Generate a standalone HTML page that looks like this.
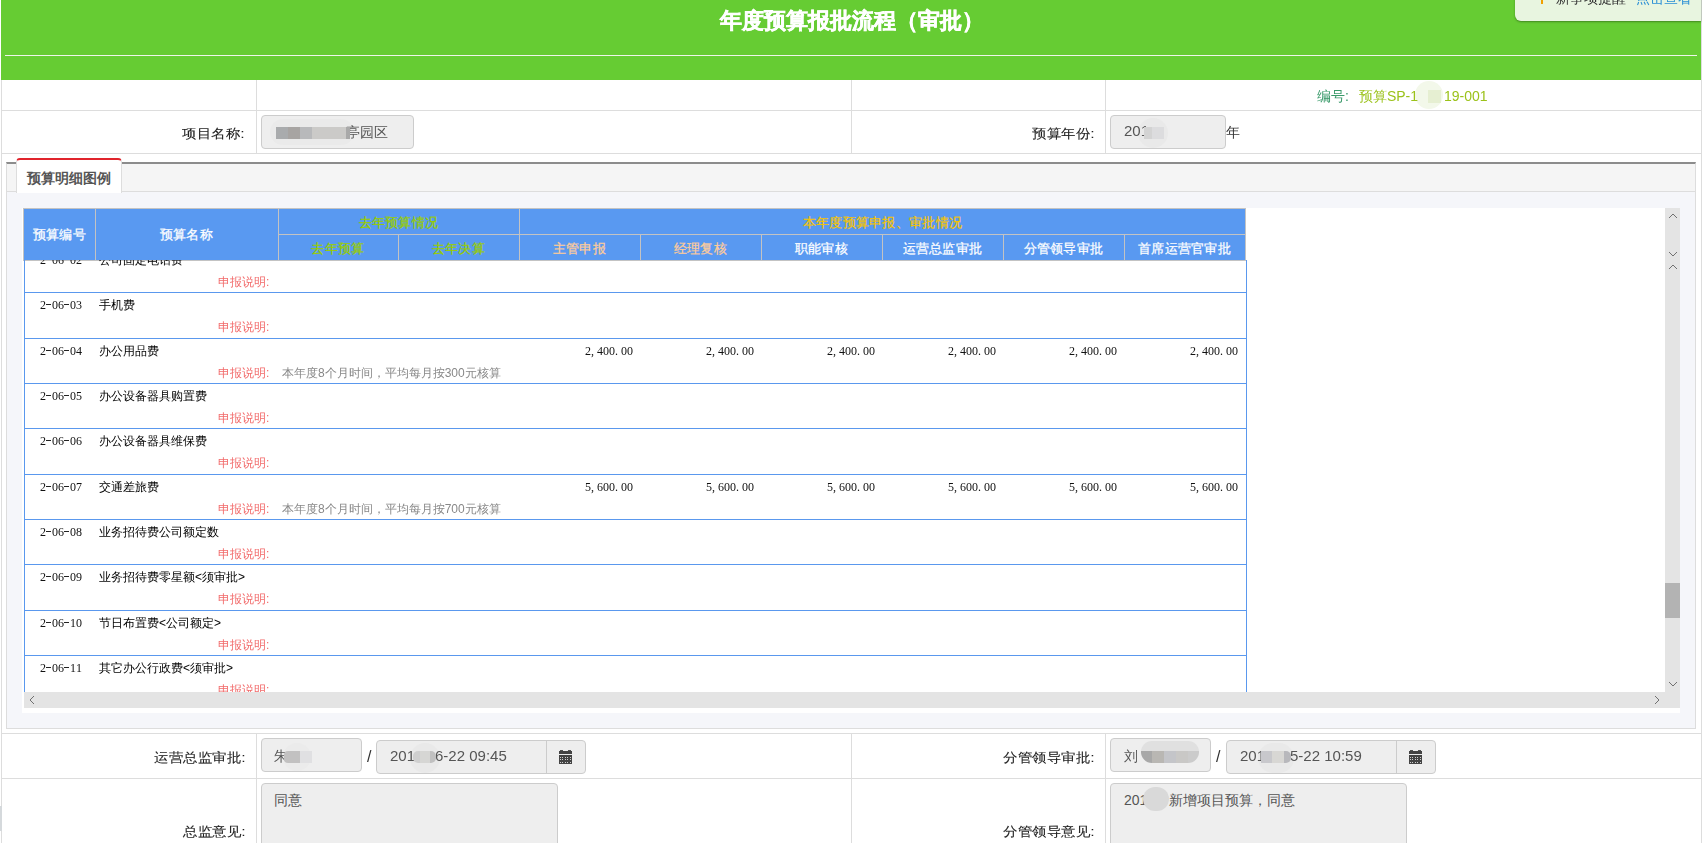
<!DOCTYPE html><html><head><meta charset="utf-8"><style>
*{margin:0;padding:0;box-sizing:border-box}
html,body{width:1702px;height:843px;overflow:hidden;background:#fff;font-family:"Liberation Sans",sans-serif;color:#333}
.a{position:absolute;white-space:nowrap}
.hl{position:absolute;height:1px;background:#ddd}
.vl{position:absolute;width:1px;background:#ddd}
.lbl{position:absolute;font-size:14px;color:#222;-webkit-text-stroke:.1px currentColor;transform:scaleY(.9);text-align:right;line-height:20px;white-space:nowrap;letter-spacing:.6px}
.inp{position:absolute;background:#eee;border:1px solid #ccc;border-radius:4px}
.t{position:absolute;font-size:14px;color:#555;line-height:20px;white-space:nowrap}
.bl{position:absolute;background:#c4c4c4}
.th{position:absolute;font-size:13px;line-height:16px;text-align:center;white-space:nowrap;-webkit-text-stroke:.25px currentColor;letter-spacing:.3px}
.cd,.num{position:absolute;font-family:"Liberation Serif",serif;font-size:12px;color:#111;line-height:12px;white-space:nowrap}
.cd i,.num i{font-style:normal;display:inline-block;width:6px;text-align:left}
.cd i.h{height:10px;vertical-align:top;background:linear-gradient(#222,#222) no-repeat 0 5px/5px 1px}
.nm{position:absolute;font-size:12px;color:#000;line-height:14px;white-space:nowrap}
.sb{position:absolute;font-size:12px;color:#f26b6b;line-height:14px;white-space:nowrap}
.ds{position:absolute;font-size:12px;color:#888;line-height:14px;white-space:nowrap}
.num{text-align:right}
</style></head><body>
<div class="vl" style="left:1px;top:0;height:843px"></div>
<div class="vl" style="left:1701px;top:0;height:843px"></div>
<div class="a" style="left:0;top:806px;width:2px;height:25px;background:#d5d9dc"></div>
<div class="a" style="left:1px;top:0;width:1700px;height:80px;background:#66cc33"></div>
<div class="a" style="left:5px;top:55px;width:1692px;height:1px;background:#eef5ea"></div>
<div class="a" style="left:7px;top:7px;width:1690px;text-align:center;color:#fff;font-size:22px;font-weight:bold;line-height:28px;-webkit-text-stroke:.5px #fff">年度预算报批流程（审批）</div>
<div class="a" style="left:1515px;top:-12px;width:186px;height:33px;background:#e8f5e0;border-radius:0 0 0 6px;box-shadow:0 1px 2px rgba(40,90,20,.6)"></div>
<div class="a" style="left:1541px;top:-3px;width:2px;height:7px;background:#f0a000"></div>
<div class="a" style="left:1556px;top:-12px;font-size:14px;line-height:20px;color:#333">新事项提醒</div>
<div class="a" style="left:1636px;top:-12px;font-size:14px;line-height:20px;color:#2a8fd6">点击查看</div>
<div class="hl" style="left:1px;top:110px;width:1700px"></div>
<div class="hl" style="left:1px;top:153px;width:1700px"></div>
<div class="vl" style="left:256px;top:80px;height:73px"></div>
<div class="vl" style="left:851px;top:80px;height:73px"></div>
<div class="vl" style="left:1105px;top:80px;height:73px"></div>
<div class="a" style="left:1415px;top:81px;width:28px;height:28px;border-radius:14px;background:#f3f8ea"></div>
<div class="a" style="left:1428px;top:90px;width:13px;height:13px;background:#e6efd2"></div>
<div class="a" style="left:1317px;top:86px;font-size:14px;line-height:20px;color:#3a9a6a">编号:<span style="color:#9bc21a;margin-left:10px">预算SP-1<span style="display:inline-block;width:26px"></span>19-001</span></div>
<div class="lbl" style="left:100px;top:123px;width:145px">项目名称:</div>
<div class="inp" style="left:261px;top:115px;width:153px;height:34px"></div>
<div class="t" style="left:346px;top:122px">亭园区</div>
<div class="a" style="left:270px;top:119px;width:84px;height:26px;border-radius:13px;background:#eaeaea;mix-blend-mode:darken"></div>
<div class="bl" style="left:276px;top:127px;width:74px;height:12px;background:linear-gradient(90deg,#a9abad 0,#a9abad 12px,#a7a4a2 12px,#a7a4a2 24px,#b8b9bb 24px,#b8b9bb 36px,#cbcac8 36px,#cbcac8 70px,#a9a9a9 70px)"></div>
<div class="lbl" style="left:950px;top:123px;width:145px">预算年份:</div>
<div class="inp" style="left:1110px;top:115px;width:116px;height:34px"></div>
<div class="t" style="left:1124px;top:121px;font-size:15px">201</div>
<div class="a" style="left:1138px;top:118px;width:30px;height:30px;border-radius:15px;background:#e9e9e9;mix-blend-mode:darken"></div>
<div class="bl" style="left:1144px;top:127px;width:20px;height:12px;background:linear-gradient(90deg,#d3d3d3 0,#d3d3d3 8px,#dcdcde 8px)"></div>
<div class="t" style="left:1226px;top:122px;color:#333">年</div>
<div class="a" style="left:6px;top:162px;width:1690px;height:567px;border:1px solid #ddd;border-top:2px solid #8c8c8c;background:#f5f6fa"></div>
<div class="a" style="left:7px;top:164px;width:1688px;height:28px;background:#f5f5f5;border-bottom:1px solid #ddd"></div>
<div class="a" style="left:16px;top:158px;width:106px;height:35px;background:#fff;border:1px solid #ddd;border-top:2px solid #e0242c;border-bottom:none;border-radius:4px 4px 0 0"></div>
<div class="a" style="left:27px;top:169px;font-size:14px;font-weight:bold;color:#555;line-height:18px">预算明细图例</div>
<div class="a" style="left:22px;top:208px;width:1658px;height:505px;background:#fff"></div>
<div class="a" style="left:23px;top:208px;width:1223px;height:53px;background:#5999f1;border:1px solid #c3c3c3"></div>
<div class="a" style="left:95px;top:208px;width:1px;height:52px;background:#c3c3c3"></div>
<div class="a" style="left:278px;top:208px;width:1px;height:52px;background:#c3c3c3"></div>
<div class="a" style="left:278px;top:234px;width:968px;height:1px;background:#c3c3c3"></div>
<div class="a" style="left:398px;top:234px;width:1px;height:26px;background:#c3c3c3"></div>
<div class="a" style="left:519px;top:208px;width:1px;height:52px;background:#c3c3c3"></div>
<div class="a" style="left:640px;top:234px;width:1px;height:26px;background:#c3c3c3"></div>
<div class="a" style="left:761px;top:234px;width:1px;height:26px;background:#c3c3c3"></div>
<div class="a" style="left:882px;top:234px;width:1px;height:26px;background:#c3c3c3"></div>
<div class="a" style="left:1003px;top:234px;width:1px;height:26px;background:#c3c3c3"></div>
<div class="a" style="left:1124px;top:234px;width:1px;height:26px;background:#c3c3c3"></div>
<div class="th" style="left:24px;top:227px;width:71px;color:#fff">预算编号</div>
<div class="th" style="left:95px;top:227px;width:183px;color:#fff">预算名称</div>
<div class="th" style="left:278px;top:215px;width:241px;color:#99cc00">去年预算情况</div>
<div class="th" style="left:519px;top:215px;width:727px;color:#f5c400">本年度预算申报、审批情况</div>
<div class="th" style="left:278px;top:241px;width:120px;color:#99cc00">去年预算</div>
<div class="th" style="left:398px;top:241px;width:121px;color:#99cc00">去年决算</div>
<div class="th" style="left:519px;top:241px;width:121px;color:#ffcc99">主管申报</div>
<div class="th" style="left:640px;top:241px;width:121px;color:#ffcc99">经理复核</div>
<div class="th" style="left:761px;top:241px;width:121px;color:#fff">职能审核</div>
<div class="th" style="left:882px;top:241px;width:121px;color:#fff">运营总监审批</div>
<div class="th" style="left:1003px;top:241px;width:121px;color:#fff">分管领导审批</div>
<div class="th" style="left:1124px;top:241px;width:121px;color:#fff">首席运营官审批</div>
<div class="a" style="left:24px;top:260px;width:1px;height:432px;background:#5a98ee"></div>
<div class="a" style="left:1246px;top:260px;width:1px;height:432px;background:#5a98ee"></div>
<div class="a" style="left:24px;top:292px;width:1223px;height:1px;background:#5a98ee"></div>
<div class="a" style="left:24px;top:338px;width:1223px;height:1px;background:#5a98ee"></div>
<div class="a" style="left:24px;top:383px;width:1223px;height:1px;background:#5a98ee"></div>
<div class="a" style="left:24px;top:428px;width:1223px;height:1px;background:#5a98ee"></div>
<div class="a" style="left:24px;top:474px;width:1223px;height:1px;background:#5a98ee"></div>
<div class="a" style="left:24px;top:519px;width:1223px;height:1px;background:#5a98ee"></div>
<div class="a" style="left:24px;top:564px;width:1223px;height:1px;background:#5a98ee"></div>
<div class="a" style="left:24px;top:610px;width:1223px;height:1px;background:#5a98ee"></div>
<div class="a" style="left:24px;top:655px;width:1223px;height:1px;background:#5a98ee"></div>
<div class="a" style="left:25px;top:260px;width:1221px;height:432px;overflow:hidden">
<div class="cd" style="left:15px;top:-6px"><i>2</i><i class="h"></i><i>0</i><i>6</i><i class="h"></i><i>0</i><i>2</i></div>
<div class="nm" style="left:74px;top:-7px">公司固定电话费</div>
<div class="sb" style="left:193px;top:15px">申报说明:</div>
<div class="cd" style="left:15px;top:39px"><i>2</i><i class="h"></i><i>0</i><i>6</i><i class="h"></i><i>0</i><i>3</i></div>
<div class="nm" style="left:74px;top:38px">手机费</div>
<div class="sb" style="left:193px;top:60px">申报说明:</div>
<div class="cd" style="left:15px;top:85px"><i>2</i><i class="h"></i><i>0</i><i>6</i><i class="h"></i><i>0</i><i>4</i></div>
<div class="nm" style="left:74px;top:84px">办公用品费</div>
<div class="sb" style="left:193px;top:106px">申报说明:</div>
<div class="ds" style="left:257px;top:106px">本年度8个月时间，平均每月按300元核算</div>
<div class="num" style="left:508px;top:85px;width:100px"><i>2</i><i>,</i><i>4</i><i>0</i><i>0</i><i>.</i><i>0</i><i>0</i></div>
<div class="num" style="left:629px;top:85px;width:100px"><i>2</i><i>,</i><i>4</i><i>0</i><i>0</i><i>.</i><i>0</i><i>0</i></div>
<div class="num" style="left:750px;top:85px;width:100px"><i>2</i><i>,</i><i>4</i><i>0</i><i>0</i><i>.</i><i>0</i><i>0</i></div>
<div class="num" style="left:871px;top:85px;width:100px"><i>2</i><i>,</i><i>4</i><i>0</i><i>0</i><i>.</i><i>0</i><i>0</i></div>
<div class="num" style="left:992px;top:85px;width:100px"><i>2</i><i>,</i><i>4</i><i>0</i><i>0</i><i>.</i><i>0</i><i>0</i></div>
<div class="num" style="left:1113px;top:85px;width:100px"><i>2</i><i>,</i><i>4</i><i>0</i><i>0</i><i>.</i><i>0</i><i>0</i></div>
<div class="cd" style="left:15px;top:130px"><i>2</i><i class="h"></i><i>0</i><i>6</i><i class="h"></i><i>0</i><i>5</i></div>
<div class="nm" style="left:74px;top:129px">办公设备器具购置费</div>
<div class="sb" style="left:193px;top:151px">申报说明:</div>
<div class="cd" style="left:15px;top:175px"><i>2</i><i class="h"></i><i>0</i><i>6</i><i class="h"></i><i>0</i><i>6</i></div>
<div class="nm" style="left:74px;top:174px">办公设备器具维保费</div>
<div class="sb" style="left:193px;top:196px">申报说明:</div>
<div class="cd" style="left:15px;top:221px"><i>2</i><i class="h"></i><i>0</i><i>6</i><i class="h"></i><i>0</i><i>7</i></div>
<div class="nm" style="left:74px;top:220px">交通差旅费</div>
<div class="sb" style="left:193px;top:242px">申报说明:</div>
<div class="ds" style="left:257px;top:242px">本年度8个月时间，平均每月按700元核算</div>
<div class="num" style="left:508px;top:221px;width:100px"><i>5</i><i>,</i><i>6</i><i>0</i><i>0</i><i>.</i><i>0</i><i>0</i></div>
<div class="num" style="left:629px;top:221px;width:100px"><i>5</i><i>,</i><i>6</i><i>0</i><i>0</i><i>.</i><i>0</i><i>0</i></div>
<div class="num" style="left:750px;top:221px;width:100px"><i>5</i><i>,</i><i>6</i><i>0</i><i>0</i><i>.</i><i>0</i><i>0</i></div>
<div class="num" style="left:871px;top:221px;width:100px"><i>5</i><i>,</i><i>6</i><i>0</i><i>0</i><i>.</i><i>0</i><i>0</i></div>
<div class="num" style="left:992px;top:221px;width:100px"><i>5</i><i>,</i><i>6</i><i>0</i><i>0</i><i>.</i><i>0</i><i>0</i></div>
<div class="num" style="left:1113px;top:221px;width:100px"><i>5</i><i>,</i><i>6</i><i>0</i><i>0</i><i>.</i><i>0</i><i>0</i></div>
<div class="cd" style="left:15px;top:266px"><i>2</i><i class="h"></i><i>0</i><i>6</i><i class="h"></i><i>0</i><i>8</i></div>
<div class="nm" style="left:74px;top:265px">业务招待费公司额定数</div>
<div class="sb" style="left:193px;top:287px">申报说明:</div>
<div class="cd" style="left:15px;top:311px"><i>2</i><i class="h"></i><i>0</i><i>6</i><i class="h"></i><i>0</i><i>9</i></div>
<div class="nm" style="left:74px;top:310px">业务招待费零星额&lt;须审批&gt;</div>
<div class="sb" style="left:193px;top:332px">申报说明:</div>
<div class="cd" style="left:15px;top:357px"><i>2</i><i class="h"></i><i>0</i><i>6</i><i class="h"></i><i>1</i><i>0</i></div>
<div class="nm" style="left:74px;top:356px">节日布置费&lt;公司额定&gt;</div>
<div class="sb" style="left:193px;top:378px">申报说明:</div>
<div class="cd" style="left:15px;top:402px"><i>2</i><i class="h"></i><i>0</i><i>6</i><i class="h"></i><i>1</i><i>1</i></div>
<div class="nm" style="left:74px;top:401px">其它办公行政费&lt;须审批&gt;</div>
<div class="sb" style="left:193px;top:423px">申报说明:</div>
</div>
<div class="a" style="left:1665px;top:208px;width:15px;height:500px;background:#e4e4e4"></div>
<div class="a" style="left:24px;top:692px;width:1656px;height:16px;background:#e4e4e4"></div>
<div class="a" style="left:1665px;top:583px;width:15px;height:35px;background:#b3b3b3"></div>
<svg class="a" style="left:1668px;top:212px" width="10" height="10"><polyline points="1,6 5,2 9,6" fill="none" stroke="#707070" stroke-width="1"/></svg>
<svg class="a" style="left:1668px;top:250px" width="10" height="10"><polyline points="1,2 5,6 9,2" fill="none" stroke="#707070" stroke-width="1"/></svg>
<svg class="a" style="left:1668px;top:263px" width="10" height="10"><polyline points="1,6 5,2 9,6" fill="none" stroke="#707070" stroke-width="1"/></svg>
<svg class="a" style="left:1668px;top:680px" width="10" height="10"><polyline points="1,2 5,6 9,2" fill="none" stroke="#707070" stroke-width="1"/></svg>
<svg class="a" style="left:28px;top:695px" width="10" height="10"><polyline points="6,1 2,5 6,9" fill="none" stroke="#707070" stroke-width="1"/></svg>
<svg class="a" style="left:1653px;top:695px" width="10" height="10"><polyline points="2,1 6,5 2,9" fill="none" stroke="#707070" stroke-width="1"/></svg>
<div class="hl" style="left:1px;top:733px;width:1700px"></div>
<div class="hl" style="left:1px;top:778px;width:1700px"></div>
<div class="vl" style="left:256px;top:733px;height:110px"></div>
<div class="vl" style="left:851px;top:733px;height:110px"></div>
<div class="vl" style="left:1105px;top:733px;height:110px"></div>
<div class="lbl" style="left:96px;top:747px;width:150px">运营总监审批:</div>
<div class="inp" style="left:261px;top:738px;width:101px;height:34px"></div>
<div class="t" style="left:274px;top:746px">朱</div>
<div class="a" style="left:283px;top:743px;width:28px;height:28px;border-radius:14px;background:#ebebeb;mix-blend-mode:darken"></div>
<div class="bl" style="left:284px;top:751px;width:28px;height:12px;border-radius:4px 0 0 4px;background:linear-gradient(90deg,#c2c1c1 0,#c2c1c1 16px,#e0e0e2 16px)"></div>
<div class="t" style="left:367px;top:747px;color:#333;font-size:16px">/</div>
<div class="inp" style="left:376px;top:740px;width:210px;height:34px"></div>
<div class="a" style="left:546px;top:740px;width:1px;height:34px;background:#ccc"></div>
<div class="t" style="left:390px;top:746px;font-size:15px">201<span style="display:inline-block;width:20px"></span>6-22 09:45</div>
<div class="a" style="left:410px;top:743px;width:30px;height:30px;border-radius:15px;background:#e9e9e9;mix-blend-mode:darken"></div>
<div class="bl" style="left:413px;top:751px;width:23px;height:12px;border-radius:5px;background:linear-gradient(90deg,#cfcfcf 0,#cfcfcf 7px,#d6d6d4 7px,#d6d6d4 17px,#c0c0c0 17px)"></div>
<div class="lbl" style="left:96px;top:821px;width:150px">总监意见:</div>
<div class="inp" style="left:261px;top:783px;width:297px;height:80px"></div>
<div class="t" style="left:274px;top:790px">同意</div>
<div class="lbl" style="left:946px;top:747px;width:149px">分管领导审批:</div>
<div class="inp" style="left:1110px;top:738px;width:101px;height:34px"></div>
<div class="t" style="left:1124px;top:746px">刘</div>
<div class="bl" style="left:1141px;top:741px;width:58px;height:22px;border-radius:11px;background:linear-gradient(#e0e0e0 0,#e0e0e0 10px,transparent 10px),linear-gradient(90deg,#a8a8a8 0,#a8a8a8 11px,#b9b7b3 11px,#b9b7b3 23px,#c4c5c9 23px,#c4c5c9 35px,#c9c8c6 35px,#c9c8c6 47px,#cbcbcb 47px)"></div>
<div class="t" style="left:1216px;top:747px;color:#333;font-size:16px">/</div>
<div class="inp" style="left:1226px;top:740px;width:210px;height:34px"></div>
<div class="a" style="left:1396px;top:740px;width:1px;height:34px;background:#ccc"></div>
<div class="t" style="left:1240px;top:746px;font-size:15px">201<span style="display:inline-block;width:25px"></span>5-22 10:59</div>
<div class="a" style="left:1258px;top:743px;width:36px;height:30px;border-radius:15px;background:#e9e9e9;mix-blend-mode:darken"></div>
<div class="bl" style="left:1261px;top:751px;width:30px;height:12px;border-radius:0 5px 5px 0;background:linear-gradient(90deg,#c8c8cc 0,#c8c8cc 11px,#d8d7d4 11px,#d8d7d4 23px,#b8b8bc 23px)"></div>
<div class="lbl" style="left:946px;top:821px;width:149px">分管领导意见:</div>
<div class="inp" style="left:1110px;top:783px;width:297px;height:80px"></div>
<div class="t" style="left:1124px;top:790px">201<span style="display:inline-block;width:22px"></span>新增项目预算，同意</div>
<div class="bl" style="left:1143px;top:787px;width:26px;height:24px;background:#d9d9d9;border-radius:12px"></div>
<svg class="a" style="left:559px;top:750px" width="14" height="15" viewBox="0 0 14 15" shape-rendering="crispEdges"><rect x="1" y="0" width="3" height="1" fill="#555"/><rect x="9" y="0" width="3" height="1" fill="#555"/><rect x="0" y="1" width="13" height="3" fill="#444"/><rect x="0" y="5" width="13" height="9" fill="#444"/><rect x="1" y="7" width="1" height="1" fill="#cfcfcf"/><rect x="3" y="7" width="1" height="1" fill="#cfcfcf"/><rect x="6" y="7" width="1" height="1" fill="#cfcfcf"/><rect x="8" y="7" width="1" height="1" fill="#cfcfcf"/><rect x="11" y="7" width="1" height="1" fill="#cfcfcf"/><rect x="1" y="9" width="1" height="1" fill="#cfcfcf"/><rect x="3" y="9" width="1" height="1" fill="#cfcfcf"/><rect x="6" y="9" width="1" height="1" fill="#cfcfcf"/><rect x="8" y="9" width="1" height="1" fill="#cfcfcf"/><rect x="11" y="9" width="1" height="1" fill="#cfcfcf"/><rect x="1" y="12" width="1" height="1" fill="#cfcfcf"/><rect x="3" y="12" width="1" height="1" fill="#cfcfcf"/><rect x="6" y="12" width="1" height="1" fill="#cfcfcf"/><rect x="8" y="12" width="1" height="1" fill="#cfcfcf"/><rect x="11" y="12" width="1" height="1" fill="#cfcfcf"/></svg>
<svg class="a" style="left:1409px;top:750px" width="14" height="15" viewBox="0 0 14 15" shape-rendering="crispEdges"><rect x="1" y="0" width="3" height="1" fill="#555"/><rect x="9" y="0" width="3" height="1" fill="#555"/><rect x="0" y="1" width="13" height="3" fill="#444"/><rect x="0" y="5" width="13" height="9" fill="#444"/><rect x="1" y="7" width="1" height="1" fill="#cfcfcf"/><rect x="3" y="7" width="1" height="1" fill="#cfcfcf"/><rect x="6" y="7" width="1" height="1" fill="#cfcfcf"/><rect x="8" y="7" width="1" height="1" fill="#cfcfcf"/><rect x="11" y="7" width="1" height="1" fill="#cfcfcf"/><rect x="1" y="9" width="1" height="1" fill="#cfcfcf"/><rect x="3" y="9" width="1" height="1" fill="#cfcfcf"/><rect x="6" y="9" width="1" height="1" fill="#cfcfcf"/><rect x="8" y="9" width="1" height="1" fill="#cfcfcf"/><rect x="11" y="9" width="1" height="1" fill="#cfcfcf"/><rect x="1" y="12" width="1" height="1" fill="#cfcfcf"/><rect x="3" y="12" width="1" height="1" fill="#cfcfcf"/><rect x="6" y="12" width="1" height="1" fill="#cfcfcf"/><rect x="8" y="12" width="1" height="1" fill="#cfcfcf"/><rect x="11" y="12" width="1" height="1" fill="#cfcfcf"/></svg>
</body></html>
